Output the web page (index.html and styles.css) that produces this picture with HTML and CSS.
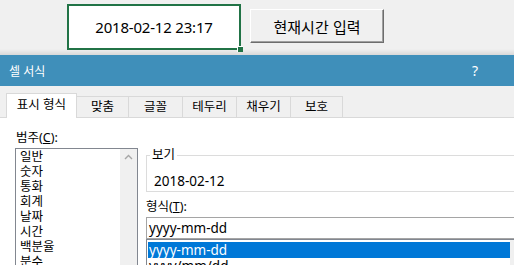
FILE: index.html
```html
<!DOCTYPE html>
<html lang="ko">
<head>
    <meta charset="UTF-8">
    <meta name="viewport" content="width=device-width, initial-scale=1.0">
    <title>셀 서식</title>
    <link rel="stylesheet" href="styles.css">
</head>
<body>
    <div class="sheet">
        <div class="cell">2018-02-12 23:17</div>
        <button class="now-btn">현재시간 입력</button>
    </div>

    <div class="dialog">
        <div class="titlebar">
            <span>셀 서식</span>
            <span class="help">?</span>
        </div>

        <div class="tabs">
            <div class="tab active" style="width: 71px">표시 형식</div>
            <div class="tab" style="width: 52px">맞춤</div>
            <div class="tab" style="width: 54px">글꼴</div>
            <div class="tab" style="width: 54px">테두리</div>
            <div class="tab" style="width: 54px">채우기</div>
            <div class="tab" style="width: 52px">보호</div>
        </div>

        <div class="content">
            <div class="left">
                <div class="label">범주(<u>C</u>):</div>
                <div class="category-list">
                    <ul>
                        <li>일반</li>
                        <li>숫자</li>
                        <li>통화</li>
                        <li>회계</li>
                        <li>날짜</li>
                        <li>시간</li>
                        <li>백분율</li>
                        <li>분수</li>
                    </ul>
                    <div class="scrollbar">
                        <svg width="17" height="17" viewBox="0 0 17 17">
                            <path d="M5 10 L8.5 6.5 L12 10" fill="none" stroke="#a6a6a6" stroke-width="1.4"/>
                        </svg>
                    </div>
                </div>
            </div>

            <div class="right">
                <fieldset class="sample">
                    <legend>보기</legend>
                    <div class="sample-value">2018-02-12</div>
                </fieldset>
                <div class="label">형식(<u>T</u>):</div>
                <div class="format-input">yyyy-mm-dd</div>
                <div class="format-list">
                    <ul>
                        <li class="selected">yyyy-mm-dd</li>
                        <li>yyyy/mm/dd</li>
                    </ul>
                    <div class="scrollbar"></div>
                </div>
            </div>
        </div>
    </div>
</body>
</html>
```

FILE: styles.css
```css
body {
    margin: 0;
    width: 514px;
    height: 265px;
    overflow: hidden;
    background-color: #fff;
    font-family: "Noto Sans", "Noto Sans CJK KR", sans-serif;
    font-size: 12.5px;
    color: #000;
}

/* worksheet strip */
.sheet {
    display: flex;
    align-items: flex-start;
    height: 55px;
    padding-left: 67px;
    box-sizing: border-box;
    padding-top: 4px;
    background: linear-gradient(to bottom, #f0f0f0 0, #f0f0f0 49px, #d8d8d8 55px);
}

.cell {
    position: relative;
    width: 174px;
    height: 46px;
    box-sizing: border-box;
    border: 2px solid #217346;
    background-color: #fff;
    font-size: 15px;
    letter-spacing: -0.2px;
    line-height: 42px;
    text-align: center;
}

.cell::after {
    content: "";
    position: absolute;
    right: -4px;
    bottom: -4px;
    width: 5px;
    height: 5px;
    background-color: #217346;
    border: 1px solid #fff;
    border-width: 1px 0 0 1px;
}

.now-btn {
    margin-left: 9px;
    margin-top: 5px;
    width: 134px;
    height: 34px;
    padding: 0;
    border: 1px solid;
    border-color: #fff #6d6d6d #6d6d6d #fff;
    box-shadow: inset -1px -1px 0 #a0a0a0;
    background-color: #f0f0f0;
    font-family: "Noto Sans CJK KR", sans-serif;
    font-size: 15px;
    color: #000;
}

/* dialog */
.titlebar {
    display: flex;
    justify-content: space-between;
    align-items: center;
    height: 31px;
    padding: 0 36px 0 9px;
    background-color: #3f8fba;
    color: #fff;
    font-size: 12px;
}

.help {
    font-size: 14px;
}

.tabs {
    display: flex;
    align-items: flex-end;
    height: 32px;
    padding-left: 6px;
    background-color: #f0f0f0;
    border-bottom: 1px solid #d9d9d9;
    box-sizing: border-box;
}

.tab {
    height: 21px;
    box-sizing: border-box;
    border: 1px solid #d9d9d9;
    border-bottom: none;
    border-left: none;
    text-align: center;
    line-height: 20px;
}

.tab.active {
    height: 25px;
    margin-bottom: -1px;
    border-left: 1px solid #d9d9d9;
    background-color: #fff;
    line-height: 22px;
}

.content {
    display: flex;
    padding: 12px 0 0 15px;
}

.label {
    height: 16px;
    line-height: 16px;
}

.left {
    flex-shrink: 0;
    width: 123px;
}

.left .label {
    margin-left: 1px;
    margin-bottom: 2px;
}

ul {
    list-style: none;
    margin: 0;
    padding: 0;
}

.category-list {
    display: flex;
    height: 120px;
    border: 1px solid #828790;
    box-sizing: border-box;
}

.category-list ul {
    flex: 1;
    padding-left: 4px;
}

.category-list li {
    height: 15px;
    line-height: 15px;
}

.scrollbar {
    flex-shrink: 0;
    width: 17px;
    background-color: #f0f0f0;
}

.right {
    flex-shrink: 0;
    width: 400px;
    margin-left: 8px;
    padding-top: 18px;
}

.sample {
    margin: 0;
    padding: 0 0 0 3px;
    height: 44px;
    box-sizing: border-box;
    border: 1px solid #dcdcdc;
}

.sample legend {
    padding: 0 2px;
    line-height: 14px;
}

.sample-value {
    margin: 11px 0 0 4px;
    line-height: 16px;
    font-size: 13.5px;
}

.right .label {
    margin-top: 7px;
    margin-bottom: 2px;
}

.format-input {
    height: 22px;
    box-sizing: border-box;
    border: 1px solid #a5a5a5;
    padding-left: 2px;
    line-height: 20px;
    font-size: 13.5px;
}

.format-list {
    display: flex;
    height: 40px;
    border-top: 1px solid #828790;
    border-left: 1px solid #828790;
}

.format-list ul {
    width: 362px;
    padding: 2px 0 0 1px;
    font-size: 13.5px;
}

.format-list li {
    height: 16px;
    line-height: 16px;
    padding-left: 1px;
}

.format-list li.selected {
    background-color: #0078d7;
    color: #fff;
}
```
